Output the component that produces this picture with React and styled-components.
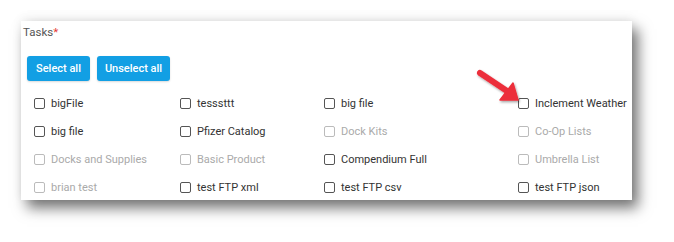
import React from "react";
import styled, { createGlobalStyle } from "styled-components";

const Global = createGlobalStyle`
  html, body {
    margin: 0;
    background: #fff;
  }
  body {
    font-family: Roboto, "Liberation Sans", sans-serif;
  }
`;

const Page = styled.div`
  position: relative;
  width: 674px;
  height: 242px;
  padding: 21px 0 0 21px;
  box-sizing: border-box;
`;

const Card = styled.div`
  width: 611px;
  height: 179px;
  box-sizing: border-box;
  background: #fff;
  padding: 0 0 0 2px;
  box-shadow: 6px 8px 13px rgba(0, 0, 0, 0.55), 0 -3px 10px rgba(0, 0, 0, 0.06);
  display: flex;
  flex-direction: column;
`;

const Label = styled.div`
  font-size: 11.5px;
  line-height: 16px;
  height: 16px;
  padding-top: 3px;
  color: #555;
  span {
    color: #e53935;
  }
`;

const Actions = styled.div`
  display: flex;
  gap: 7px;
  margin: 16px 0 0 4px;
`;

const Button = styled.button`
  height: 25px;
  width: ${(p) => p.w}px;
  border: none;
  border-radius: 3px;
  background: #129fe4;
  color: #fff;
  font-family: Roboto, "Liberation Sans", sans-serif;
  font-size: 11px;
  font-weight: 500;
  padding: 0;
  box-shadow: 0 1px 2px rgba(0, 0, 0, 0.15);
`;

const Grid = styled.div`
  display: grid;
  grid-template-columns: 146px 144px 194px 1fr;
  grid-auto-rows: 28px;
  margin: 8px 0 0 11px;
`;

const Item = styled.label`
  display: flex;
  align-items: center;
  gap: 6px;
  font-size: 11px;
  color: ${(p) => (p.disabled ? "#aaa" : "#333")};
  white-space: nowrap;
`;

const Box = styled.span`
  width: 11px;
  height: 11px;
  box-sizing: border-box;
  border: 1.5px solid ${(p) => (p.disabled ? "#bbb" : "#555")};
  border-radius: 2px;
  flex: none;
`;

const Arrow = styled.svg`
  position: absolute;
  left: 470px;
  top: 62px;
  overflow: visible;
`;

const tasks = [
  ["bigFile", false],
  ["tesssttt", false],
  ["big file", false],
  ["Inclement Weather", false],
  ["big file", false],
  ["Pfizer Catalog", false],
  ["Dock Kits", true],
  ["Co-Op Lists", true],
  ["Docks and Supplies", true],
  ["Basic Product", true],
  ["Compendium Full", false],
  ["Umbrella List", true],
  ["brian test", true],
  ["test FTP xml", false],
  ["test FTP csv", false],
  ["test FTP json", false],
];

export default function App() {
  return (
    <>
      <Global />
      <Page>
        <Card>
          <Label>
            Tasks<span>*</span>
          </Label>
          <Actions>
            <Button w={63}>Select all</Button>
            <Button w={73}>Unselect all</Button>
          </Actions>
          <Grid>
            {tasks.map(([name, disabled], i) => (
              <Item key={i} disabled={disabled}>
                <Box disabled={disabled} />
                {name}
              </Item>
            ))}
          </Grid>
        </Card>
        <Arrow width="60" height="48" viewBox="0 0 60 48">
          <defs>
            <filter id="sh" x="-20%" y="-20%" width="150%" height="150%">
              <feDropShadow dx="1" dy="1.5" stdDeviation="1" floodOpacity="0.35" />
            </filter>
          </defs>
          <g filter="url(#sh)" fill="#ec2f3b" stroke="#ec2f3b" strokeLinejoin="round">
            <line x1="10" y1="11" x2="37" y2="29" strokeWidth="6" strokeLinecap="round" />
            <polygon points="48,38 30,38 43,21" strokeWidth="1.5" />
          </g>
        </Arrow>
      </Page>
    </>
  );
}
